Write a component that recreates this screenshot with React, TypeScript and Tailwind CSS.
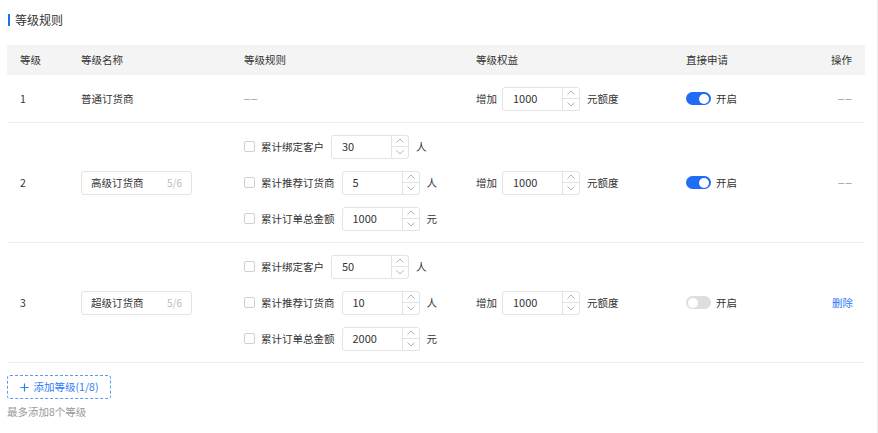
import React from "react";

const font = { fontFamily: '"Noto Sans CJK SC", "Noto Sans", sans-serif' };

function NumInput({ value }: { value: string }) {
  return (
    <div className="flex h-[24px] w-[78px] items-stretch rounded-[3px] border border-[#e3e3e3] bg-white">
      <div className="flex flex-1 items-center pl-[10px] text-[11px] text-[#333]">{value}</div>
      <div className="flex w-[17px] flex-col border-l border-[#e3e3e3]">
        <div className="flex flex-1 items-center justify-center border-b border-[#e3e3e3]">
          <svg width="8" height="5" viewBox="0 0 8 5"><path d="M0.5 4.5 L4 1 L7.5 4.5" fill="none" stroke="#aaa" strokeWidth="0.9" /></svg>
        </div>
        <div className="flex flex-1 items-center justify-center">
          <svg width="8" height="5" viewBox="0 0 8 5"><path d="M0.5 0.5 L4 4 L7.5 0.5" fill="none" stroke="#aaa" strokeWidth="0.9" /></svg>
        </div>
      </div>
    </div>
  );
}

function Switch({ on }: { on: boolean }) {
  return (
    <div className="flex items-center gap-[5px]">
      <div className={`relative h-[13px] w-[25px] rounded-full ${on ? "bg-[#1f6cf5]" : "bg-[#dedede]"}`}>
        <div className={`absolute top-[1.5px] h-[10px] w-[10px] rounded-full bg-white ${on ? "right-[2px]" : "left-[2px]"}`} />
      </div>
      <span className="text-[10.5px] text-[#333]">开启</span>
    </div>
  );
}

function Benefit() {
  return (
    <div className="flex items-center text-[10.5px] text-[#333]">
      <span className="mr-[5px]">增加</span>
      <NumInput value="1000" />
      <span className="ml-[7px]">元额度</span>
    </div>
  );
}

function Rule({ label, value, unit }: { label: string; value: string; unit: string }) {
  return (
    <div className="flex items-center text-[10.5px] text-[#333]">
      <div className="mr-[6px] h-[11px] w-[11px] rounded-[2px] border border-[#cfcfcf] bg-white" />
      <span className="mr-[7px]">{label}</span>
      <NumInput value={value} />
      <span className="ml-[7px]">{unit}</span>
    </div>
  );
}

function NameInput({ value }: { value: string }) {
  return (
    <div className="flex h-[24px] w-[111px] items-center justify-between rounded-[3px] border border-[#e3e3e3] px-[9px] text-[10.5px]">
      <span className="text-[#333]">{value}</span>
      <span className="text-[10px] text-[#bbb]">5/6</span>
    </div>
  );
}

function Dash() {
  return <span className="tracking-[1.5px] text-[#999]" style={{ fontFamily: '"Liberation Sans", sans-serif' }}>––</span>;
}

const grid = "grid grid-cols-[61px_163px_232px_210px_1fr_72px]";

export default function App() {
  return (
    <div className="relative h-[433px] w-[878px] overflow-hidden border-r border-[#ececec] bg-white" style={font}>
      <div className="flex h-[38px] items-center pl-[8px] pt-[1px]">
        <div className="h-[12px] w-[2px] bg-[#1f6cf5]" />
        <span className="ml-[5px] text-[12px] text-[#333]">等级规则</span>
      </div>
      <div className="mx-[7px] mt-[7px] w-[858px]">
        <div className={`${grid} h-[30px] items-center bg-[#f4f4f4] text-[10.5px] text-[#333]`}>
          <div className="pl-[13px]">等级</div>
          <div className="pl-[13px]">等级名称</div>
          <div className="pl-[13px]">等级规则</div>
          <div className="pl-[13px]">等级权益</div>
          <div className="pl-[13px]">直接申请</div>
          <div className="pr-[13px] text-right">操作</div>
        </div>
        <div className={`${grid} h-[48px] items-center border-b border-[#ececec] text-[10.5px] text-[#333]`}>
          <div className="pl-[13px]">1</div>
          <div className="pl-[13px]">普通订货商</div>
          <div className="pl-[13px]"><Dash /></div>
          <div className="pl-[13px]"><Benefit /></div>
          <div className="pl-[13px]"><Switch on /></div>
          <div className="pr-[12px] text-right"><Dash /></div>
        </div>
        <div className={`${grid} h-[120px] items-center border-b border-[#ececec] text-[10.5px] text-[#333]`}>
          <div className="pl-[13px]">2</div>
          <div className="pl-[13px]"><NameInput value="高级订货商" /></div>
          <div className="flex flex-col gap-[12px] pl-[13px]">
            <Rule label="累计绑定客户" value="30" unit="人" />
            <Rule label="累计推荐订货商" value="5" unit="人" />
            <Rule label="累计订单总金额" value="1000" unit="元" />
          </div>
          <div className="pl-[13px]"><Benefit /></div>
          <div className="pl-[13px]"><Switch on /></div>
          <div className="pr-[12px] text-right"><Dash /></div>
        </div>
        <div className={`${grid} h-[120px] items-center border-b border-[#ececec] text-[10.5px] text-[#333]`}>
          <div className="pl-[13px]">3</div>
          <div className="pl-[13px]"><NameInput value="超级订货商" /></div>
          <div className="flex flex-col gap-[12px] pl-[13px]">
            <Rule label="累计绑定客户" value="50" unit="人" />
            <Rule label="累计推荐订货商" value="10" unit="人" />
            <Rule label="累计订单总金额" value="2000" unit="元" />
          </div>
          <div className="pl-[13px]"><Benefit /></div>
          <div className="pl-[13px]"><Switch on={false} /></div>
          <div className="pr-[12px] text-right text-[#2f7cf6]">删除</div>
        </div>
        <div className="mt-[12px] flex h-[24px] w-[104px] items-center justify-center gap-[5px] rounded-[3px] border border-dashed border-[#5b9bf8] text-[10.5px] text-[#2f7cf6]">
          <svg width="9" height="9" viewBox="0 0 9 9"><path d="M4.5 0.5 V8.5 M0.5 4.5 H8.5" stroke="#2f7cf6" strokeWidth="1.2" /></svg>
          <span>添加等级(1/8)</span>
        </div>
        <div className="mt-[5px] text-[10.5px] text-[#999]">最多添加8个等级</div>
      </div>
    </div>
  );
}
